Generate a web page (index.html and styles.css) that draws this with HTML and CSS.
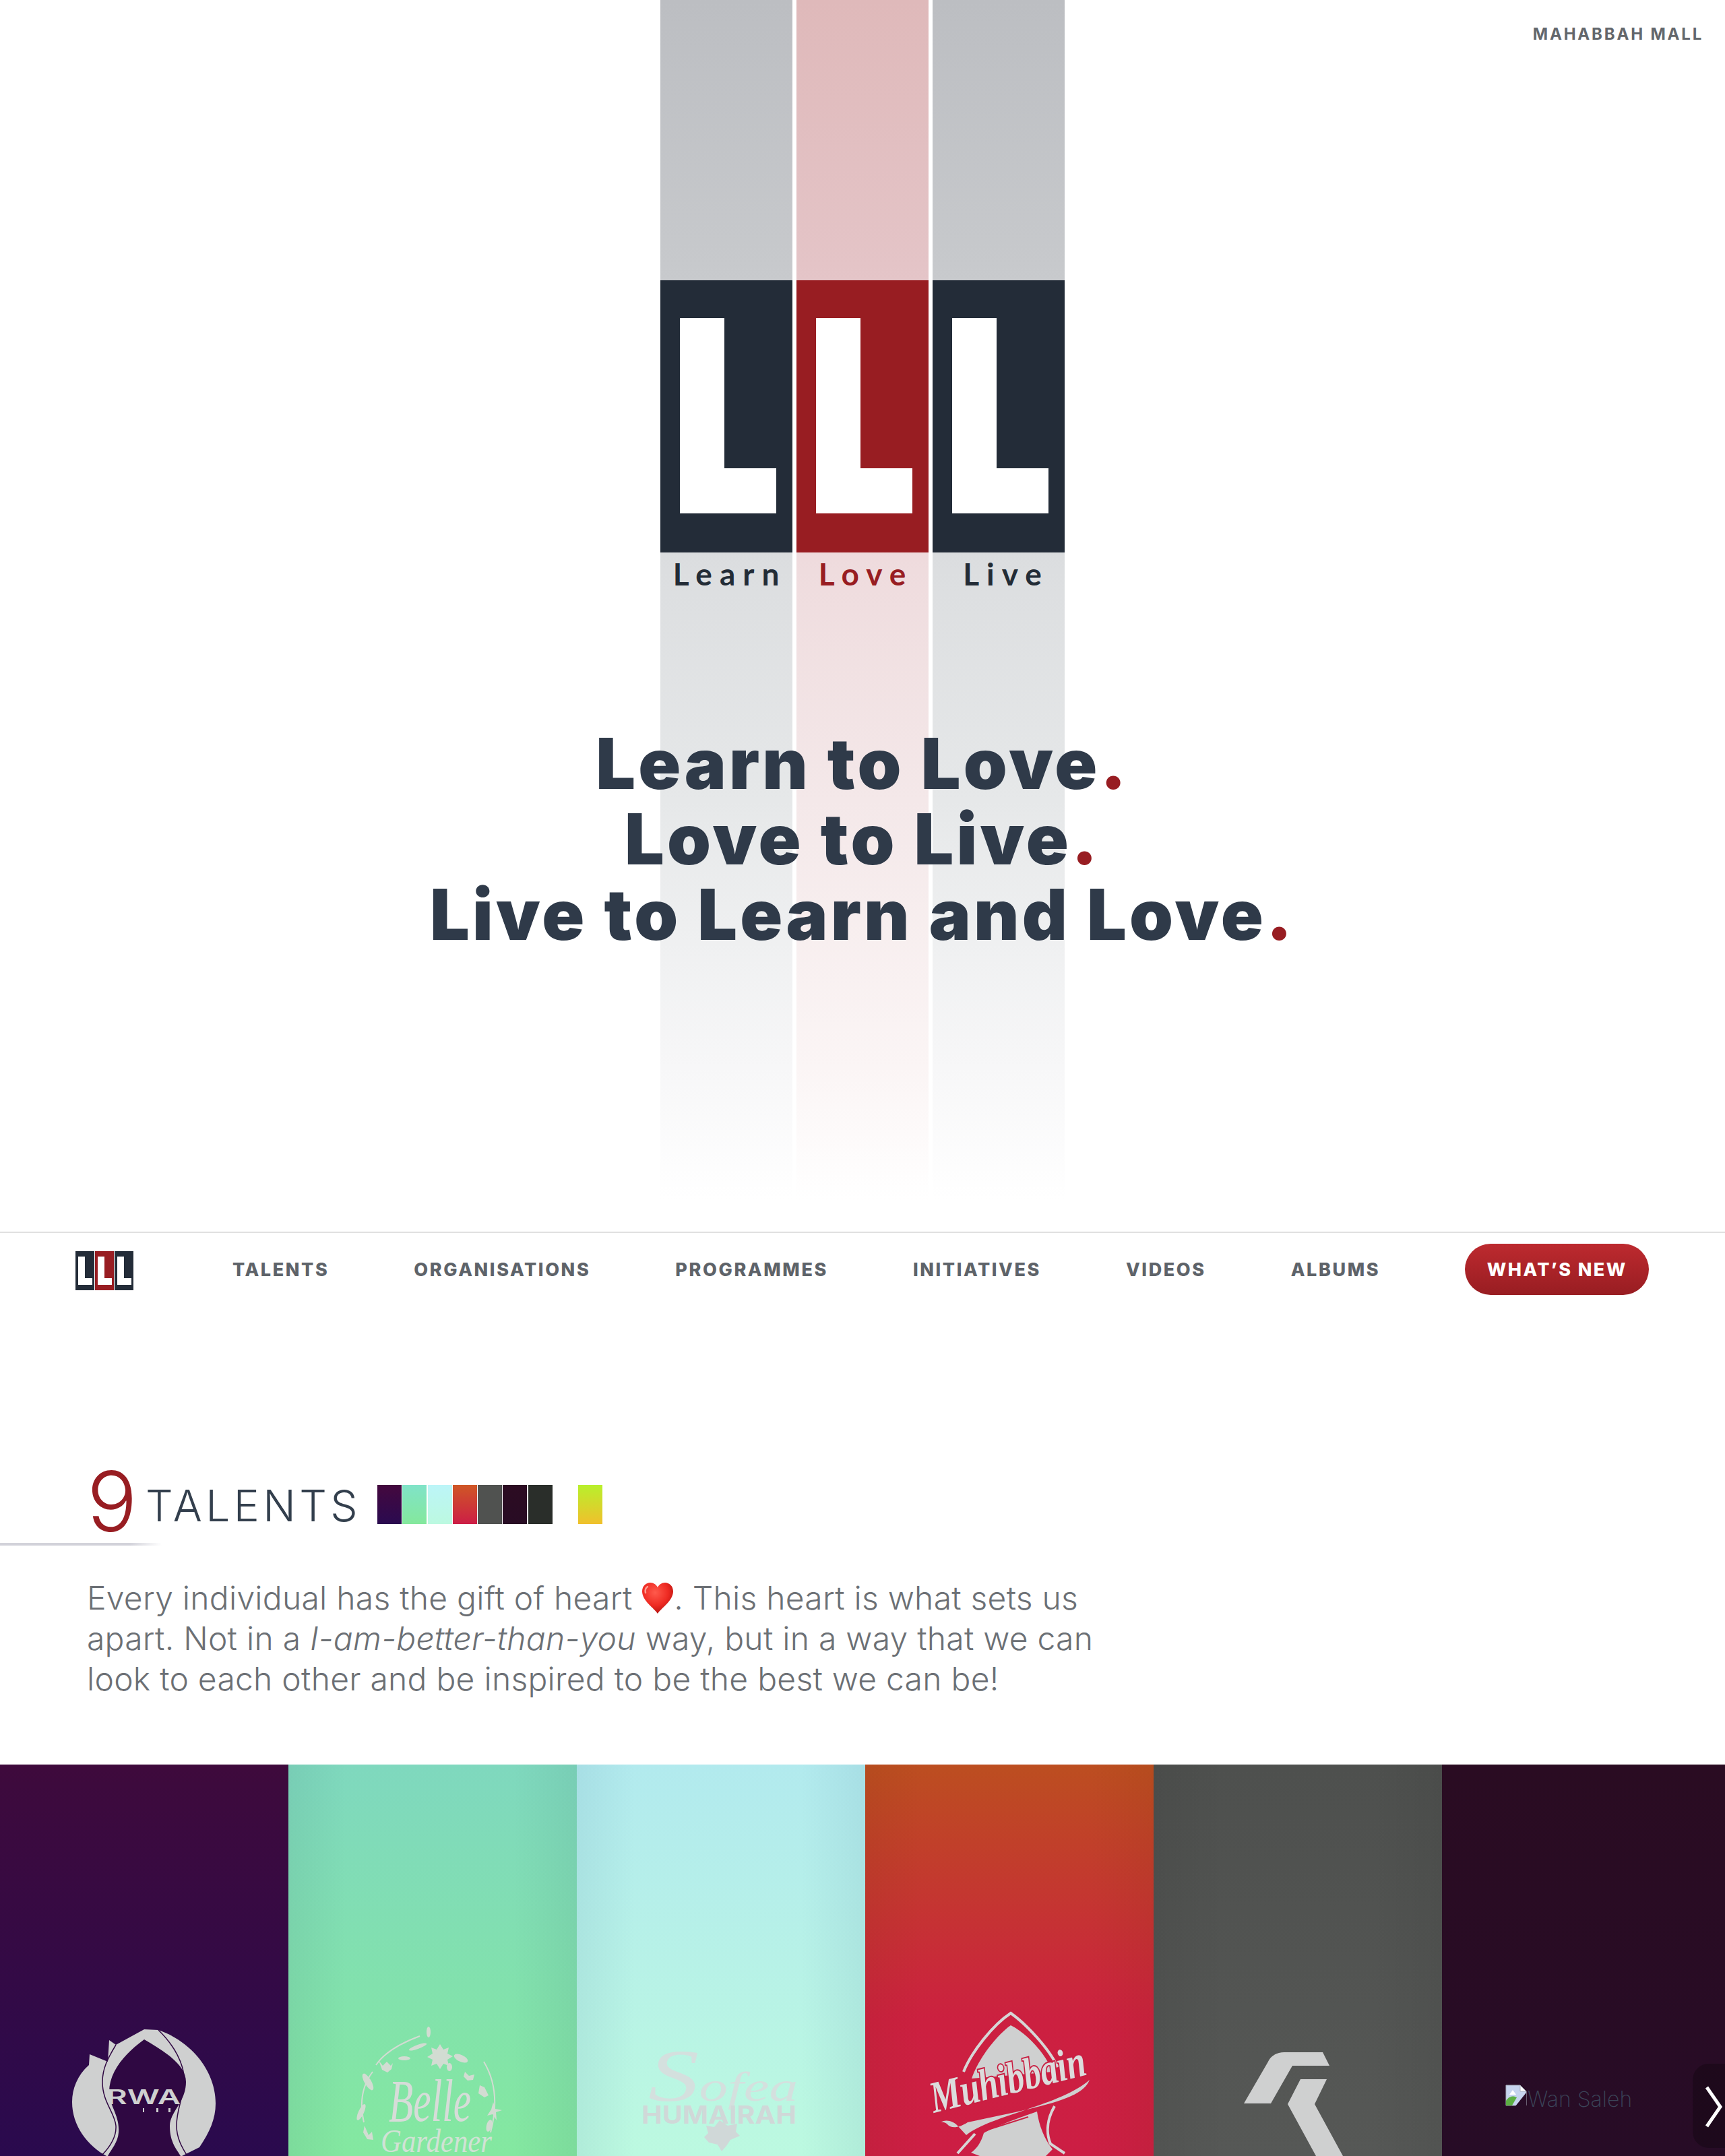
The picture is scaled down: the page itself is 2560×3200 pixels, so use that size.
FILE: index.html
```html
<!DOCTYPE html>
<html lang="en">
<head>
<meta charset="utf-8">
<title>Learn Love Live</title>
<link rel="stylesheet" href="styles.css">
</head>
<body>
<header class="hero">
  <div class="bars">
    <div class="bar bar-dark">
      <div class="block"><span class="ell"></span></div>
      <div class="bar-label">Learn</div>
    </div>
    <div class="bar bar-red">
      <div class="block"><span class="ell"></span></div>
      <div class="bar-label">Love</div>
    </div>
    <div class="bar bar-dark">
      <div class="block"><span class="ell"></span></div>
      <div class="bar-label bar-label-end">Live</div>
    </div>
  </div>
  <a class="mall" href="#">MAHABBAH MALL</a>
  <h1 class="tagline">
    <span class="tag-line">Learn to Love<b class="dot">.</b></span>
    <span class="tag-line">Love to Live<b class="dot">.</b></span>
    <span class="tag-line">Live to Learn and Love<b class="dot">.</b></span>
  </h1>
</header>

<nav class="nav">
  <a class="mini-logo" href="#">
    <span class="mini mini-dark"><i class="mini-ell"></i></span>
    <span class="mini mini-red"><i class="mini-ell"></i></span>
    <span class="mini mini-dark"><i class="mini-ell"></i></span>
  </a>
  <a class="nav-link" href="#">TALENTS</a>
  <a class="nav-link" href="#">ORGANISATIONS</a>
  <a class="nav-link" href="#">PROGRAMMES</a>
  <a class="nav-link" href="#">INITIATIVES</a>
  <a class="nav-link" href="#">VIDEOS</a>
  <a class="nav-link" href="#">ALBUMS</a>
  <a class="whats-new" href="#">WHAT’S NEW</a>
</nav>

<main class="talents">
  <div class="talents-head">
    <span class="count">9</span>
    <h2 class="talents-title">TALENTS</h2>
    <div class="swatches">
      <i class="sw sw1"></i><i class="sw sw2"></i><i class="sw sw3"></i><i class="sw sw4"></i><i class="sw sw5"></i><i class="sw sw6"></i><i class="sw sw7"></i><i class="sw sw8"></i><i class="sw sw9"></i>
    </div>
  </div>
  <div class="rule"></div>
  <p class="intro">Every individual has the gift of heart <svg class="heart" viewBox="0 0 48 48" aria-label="heart"><defs><radialGradient id="heartFill" cx="42%" cy="32%" r="70%"><stop offset="0" stop-color="#ff5a4c"/><stop offset=".6" stop-color="#ee2a22"/><stop offset="1" stop-color="#b3120f"/></radialGradient></defs><path d="M24 47C19 39 1 28 1 14 1 6 7 1 13 1c5 0 9 3 11 7 2-4 6-7 11-7 6 0 12 5 12 13 0 14-18 25-23 33z" fill="url(#heartFill)"/><path d="M9 7c-3 2-4 5-3 9" stroke="#ff9d92" stroke-width="2.5" fill="none" stroke-linecap="round"/></svg>. This heart is what sets us<br>apart. Not in a <em>I-am-better-than-you</em> way, but in a way that we can<br>look to each other and be inspired to be the best we can be!</p>

  <section class="carousel">
    <article class="card c1">
      <svg class="logo" viewBox="0 0 428 250">
        <path class="silver" d="M235 63C285 80 320 125 320 172C320 195 311 215 296 237L270 250H158C130 235 107 205 107 170C107 150 115 130 132 115L133 99L160 110L162 78L172 85L214 62Z"/>
        <path class="c1-ink" d="M214 77C185 98 162 125 162 155C162 175 178 190 176 215C175 230 165 240 160 250H268C262 240 252 230 252 205C252 185 276 170 276 140C276 115 245 95 214 77Z"/>
        <path class="c1-line" d="M235 63C258 85 275 115 273 140C272 165 262 180 262 205C262 225 272 240 278 250M150 250C165 235 173 220 172 205C170 185 152 170 152 140C152 120 160 105 172 85"/>
        <text class="rwa" x="158" y="173" textLength="110" lengthAdjust="spacingAndGlyphs">RWA</text>
        <path class="silver" d="M212 179h2v6h-2zM232 179h3v6h-3zM250 179h3v6h-3z"/>
      </svg>
    </article>

    <article class="card c2">
      <svg class="logo" viewBox="0 0 428 250">
        <g class="faded">
          <path class="wreath" d="M112 200C105 170 110 145 125 125M130 115C140 100 160 85 195 72M290 110C305 135 312 170 300 215"/>
          <ellipse cx="118" cy="140" rx="5" ry="14" transform="rotate(-30 118 140)"/>
          <ellipse cx="108" cy="185" rx="4" ry="13" transform="rotate(25 108 185)"/>
          <path d="M113 205l6 14 5-5 2 12-9-1-6-10z"/>
          <path d="M134 108l6 8 6-6 6 6 3-4-2 9-6 5-8-4z"/>
          <ellipse cx="172" cy="105" rx="9" ry="3"/>
          <ellipse cx="192" cy="88" rx="14" ry="3" transform="rotate(-20 192 88)"/>
          <ellipse cx="208" cy="66" rx="3" ry="8"/>
          <path d="M225 84l5 8 8-3-2 9 8 4-8 5 2 9-8-3-5 8-5-8-8 3 2-9-8-4 8-5-2-9 8 3z"/>
          <ellipse cx="256" cy="105" rx="11" ry="5" transform="rotate(25 256 105)"/>
          <ellipse cx="239" cy="118" rx="4" ry="6"/>
          <path d="M262 125l6 6 8-2-2 8-8 1-6-6z"/>
          <path d="M284 145l7 3 6 12-6 3-9-6z"/>
          <path d="M304 170l3 10 10 2-9 3 1 12-6-9-8 2 6-9z"/>
          <ellipse cx="298" cy="205" rx="4" ry="9" transform="rotate(15 298 205)"/>
          <text class="belle" x="149" y="198" textLength="122" lengthAdjust="spacingAndGlyphs">Belle</text>
          <text class="gardener" x="137" y="244" textLength="165" lengthAdjust="spacingAndGlyphs">Gardener</text>
        </g>
      </svg>
    </article>

    <article class="card c3">
      <svg class="logo" viewBox="0 0 428 250">
        <g class="faded3">
          <text class="sofea" x="106" y="168" textLength="222" lengthAdjust="spacingAndGlyphs"><tspan class="sofea-s">S</tspan>ofea</text>
          <text class="humairah" x="96" y="202" textLength="230" lengthAdjust="spacingAndGlyphs">HUMAIRAH</text>
          <path d="M212 197l12 8 14-3-2 12 6 6-14 6-6 9-7 8-6-10-13-3-7-8 6-6-3-11 12 2z"/>
        </g>
      </svg>
    </article>

    <article class="card c4">
      <svg class="logo" viewBox="0 0 428 250">
        <path class="arch" d="M146 125C158 95 190 55 216 38C240 55 272 90 286 118"/>
        <path class="silver" d="M216 56C196 70 168 105 158 135L278 125C268 98 240 68 216 56Z"/>
        <path class="silver" d="M333 137C322 165 270 175 152 200C140 208 128 210 122 203C118 199 113 199 111 201C118 195 130 197 138 206L150 219C185 190 290 175 333 137Z"/>
        <path class="silver" d="M255 184C215 198 190 208 176 216C172 230 165 240 157 245L170 250H268L278 240C266 225 258 205 255 184Z"/>
        <path class="arch" d="M163 217L137 246M281 176C270 195 268 215 275 232L296 246"/>
        <path class="arch4" d="M242 192L179 212"/>
        <text class="muhibbain" transform="translate(102 186) rotate(-14)" textLength="236" lengthAdjust="spacingAndGlyphs">Muhibbain</text>
      </svg>
    </article>

    <article class="card c5">
      <svg class="logo" viewBox="0 0 428 250">
        <path class="silver" d="M134 172L174 172L206 116L261 116L251 96L194 96C184 96 175 100 170 110Z"/>
        <path class="silver" d="M218 136L257 136L239 173L281 250L241 250L199 173Z"/>
      </svg>
    </article>

    <article class="card c6">
      <div class="broken">
        <svg class="broken-icon" viewBox="0 0 32 32">
          <path d="M1 1h21l9 9v21H1z" fill="#c6d4ee" stroke="#a9b0bc"/>
          <path d="M22 1v9h9z" fill="#fff" stroke="#a9b0bc"/>
          <path d="M6 15l5-7 5 7z" fill="#fff"/>
          <path d="M1 31v-7c4-7 11-8 16-5l-7 12z" fill="#5cb043"/>
          <path d="M15 32L31 12v20z" fill="#270c26"/>
        </svg>
        <span class="alt">Wan Saleh</span>
      </div>
    </article>

    <button class="next" type="button" aria-label="Next">
      <svg class="next-icon" viewBox="0 0 28 64"><path d="M4 4L24 33L4 62"/></svg>
    </button>
  </section>
</main>
</body>
</html>
```
FILE: styles.css
```css
* { box-sizing: border-box; }
html, body { margin: 0; padding: 0; background: #fff; }
body { width: 2560px; height: 3200px; overflow: hidden; font-family: "Inter", "Liberation Sans", sans-serif; }
a { text-decoration: none; color: inherit; }

/* hero: bars and copy share one grid cell */
.hero { display: grid; grid-template-columns: 1fr; height: 1828px; }
.hero > * { grid-area: 1 / 1; }

.bars { display: flex; justify-content: center; gap: 6px; }
.bar { width: 196px; height: 1800px; padding-top: 416px; text-align: center; }
.bar-dark { background: linear-gradient(180deg, #bcbec2 0%, #c7c9cc 22%, #dcdee0 47%, #e6e8e9 66%, #f7f7f8 88%, #fff 99%); color: #232c36; }
.bar-red { background: linear-gradient(180deg, #dfb9ba 0%, #e4c4c7 22%, #efdcde 47%, #f4e8e9 66%, #fbf5f5 88%, #fff 99%); color: #981d22; }
.block { height: 404px; background: #232c38; padding: 56px 0 0 29px; }
.bar-red .block { background: #981d22; }
.ell { display: block; width: 143px; height: 290px; border-left: 66px solid #fff; border-bottom: 67px solid #fff; }
.bar-label { font-family: "Lato", sans-serif; font-size: 46px; font-weight: 700; letter-spacing: 11px; line-height: 50px; margin-top: 7px; padding-left: 10px; }
.bar-label-end { padding-left: 22px; }

.mall { justify-self: end; align-self: start; margin: 36px 32px 0 0; font-size: 24px; font-weight: 700; letter-spacing: 2.8px; line-height: 30px; color: #63676c; }

.tagline { margin: 0; padding-top: 1077px; align-self: start; justify-self: center; text-align: center; font-size: 104px; font-weight: 900; line-height: 112px; color: #2f3a49; letter-spacing: 4.2px; }
.tag-line { display: block; }
.dot { color: #981d22; font-weight: 900; }

/* nav */
.nav { height: 110px; border-top: 2px solid #e0e0e0; display: flex; align-items: center; padding: 2px 0 0 112px; }
.mini-logo { display: flex; gap: 1px; width: 86px; height: 58px; margin-right: 147px; margin-top: 2px; }
.mini { flex: 1; background: #232c38; padding: 8px 0 0 4px; }
.mini-red { background: #981d22; }
.mini-ell { display: block; width: 21px; height: 42px; border-left: 10px solid #fff; border-bottom: 10px solid #fff; }
.nav-link { font-size: 27px; font-weight: 800; letter-spacing: 2.6px; color: #5e6369; line-height: 34px; margin-right: 126px; white-space: nowrap; }
.whats-new { height: 76px; width: 273px; margin-top: -2px; border-radius: 38px; background: linear-gradient(180deg, #bd2a2f, #981d22); color: #fff; font-size: 27px; font-weight: 800; letter-spacing: 2.4px; display: flex; align-items: center; justify-content: center; white-space: nowrap; }

/* talents */
.talents { padding-top: 237px; }
.talents-head { display: flex; align-items: flex-start; height: 115px; padding-left: 129px; }
.count { font-size: 124px; font-weight: 300; line-height: 107px; color: #981d22; width: 87px; }
.talents-title { margin: 0; font-size: 64px; font-weight: 300; letter-spacing: 5.4px; line-height: 64px; color: #333f4d; padding-top: 28px; width: 344px; white-space: nowrap; }
.swatches { display: flex; gap: 1.25px; padding-top: 29px; }
.sw { display: block; width: 36px; height: 58px; }
.sw1 { background: linear-gradient(180deg, #44083e, #2a0a50); }
.sw2 { background: linear-gradient(180deg, #80e3c8, #84e89c); }
.sw3 { background: linear-gradient(180deg, #bcf5f8, #bcf9e0); }
.sw4 { background: linear-gradient(180deg, #cf5726, #cc1e46); }
.sw5 { background: #505250; }
.sw6 { background: linear-gradient(180deg, #2c0c22, #280c24); }
.sw7 { background: #2a2e2a; }
.sw8 { background: #fff; }
.sw9 { background: linear-gradient(180deg, #b8f02c, #f0c02c); }

.rule { width: 240px; height: 4px; background: linear-gradient(90deg, #d2d2da 80%, rgba(210,210,218,0)); }
.intro { margin: 48px 0 0; padding-left: 129px; font-size: 48px; font-weight: 300; letter-spacing: .25px; line-height: 60px; color: #6c7075; }
.intro em { font-style: italic; }
.heart { width: 48px; height: 48px; vertical-align: -7px; }

/* carousel */
.carousel { position: relative; display: flex; height: 581px; margin-top: 97px; width: 2560px; overflow: hidden; }
.card { flex: 0 0 428px; height: 581px; padding-top: 331px; }
.logo { display: block; width: 428px; height: 250px; overflow: hidden; }
.silver { fill: #cfd0d0; }
.c1 { background: linear-gradient(180deg, #3e0a3c, #2a0a4e); }
.c2 { background: linear-gradient(90deg, rgba(60,110,110,.1), rgba(60,110,110,0) 20%, rgba(60,110,110,0) 78%, rgba(60,110,110,.1)), linear-gradient(180deg, #7fd8be, #84e8a0); }
.c3 { background: linear-gradient(90deg, rgba(70,120,150,.1), rgba(70,120,150,0) 20%, rgba(70,120,150,0) 78%, rgba(70,120,150,.1)), linear-gradient(180deg, #b2eaee, #bcf9e0); }
.c4 { background: linear-gradient(90deg, rgba(100,50,0,.08), rgba(100,50,0,0) 20%, rgba(100,50,0,0) 78%, rgba(100,50,0,.08)), linear-gradient(180deg, #bc4e20, #cc2040 65%, #cc1e44); }
.c5 { background: linear-gradient(90deg, rgba(0,0,0,.05), rgba(0,0,0,0) 25%, rgba(0,0,0,0) 75%, rgba(0,0,0,.05)), linear-gradient(180deg, #4e504e, #565856); }
.c6 { background: linear-gradient(180deg, #2a0c22, #270c26); }

.c1-ink { fill: #2f0842; }
.c1-line { fill: none; stroke: #2f0842; stroke-width: 1.5; }
.rwa { font-family: "Inter", sans-serif; font-size: 30px; font-weight: 600; fill: #cfd0d0; }

.faded { fill: #d2dcd2; stroke: none; }
.wreath { fill: none; stroke: #d2dcd2; stroke-width: 2; }
.belle { font-family: "Liberation Serif", serif; font-style: italic; font-size: 88px; fill: #d6dcd8; }
.gardener { font-family: "Liberation Serif", serif; font-style: italic; font-size: 48px; fill: #d0e2d4; }

.faded3 { fill: #d0d8d8; }
.sofea { font-family: "Liberation Serif", serif; font-style: italic; font-size: 62px; fill: #d4e0de; }
.sofea-s { font-size: 110px; }
.humairah { font-family: "Inter", sans-serif; font-weight: 700; font-size: 37px; fill: #d0d8d8; }

.arch { fill: none; stroke: #d6d6d6; stroke-width: 4; }
.arch4 { fill: none; stroke: #cc1e42; stroke-width: 2; }
.muhibbain { font-family: "Liberation Serif", serif; font-style: italic; font-weight: 700; font-size: 66px; fill: #dcdcdc; stroke: #c81f42; stroke-width: 4; paint-order: stroke; }

.broken { display: flex; align-items: flex-start; padding: 144px 0 0 94px; }
.broken-icon { display: block; width: 32px; height: 32px; flex: none; }
.alt { font-size: 32px; font-weight: 200; color: #3b4458; line-height: 44px; margin-left: 1px; }

.next { position: absolute; right: 0; bottom: 12px; width: 48px; height: 125px; padding: 0 0 0 17px; border: 0; border-radius: 24px 0 0 24px; background: rgba(0,0,0,.25); display: flex; align-items: center; }
.next-icon { display: block; width: 28px; height: 64px; fill: none; stroke: #fff; stroke-width: 5; }
```
